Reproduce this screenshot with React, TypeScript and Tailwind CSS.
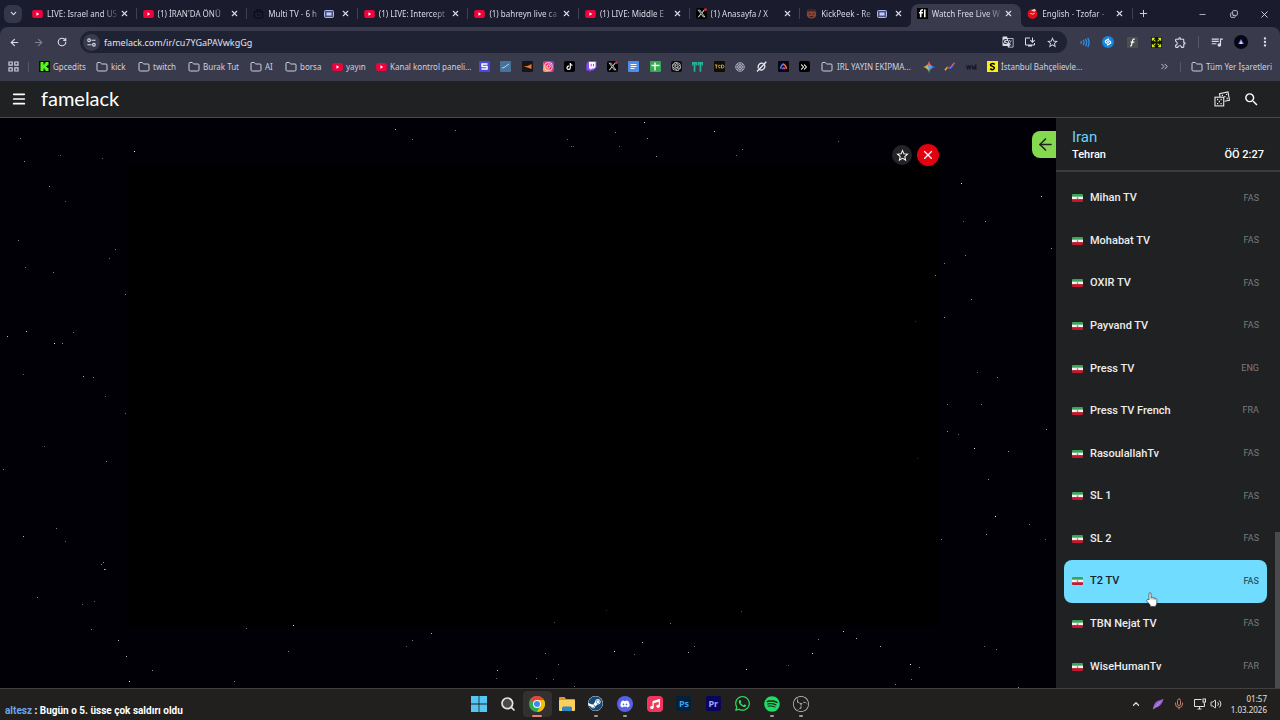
import React from 'react';
import {
  FaDiscord,
  FaInstagram,
  FaMusic,
  FaSpotify,
  FaTiktok,
  FaWhatsapp,
  FaXTwitter,
} from 'react-icons/fa6';
import { FaSteam } from 'react-icons/fa';
import {
  MdGTranslate,
  MdOutlineExtension,
  MdOutlineInstallDesktop,
  MdQueueMusic,
  MdStarBorder,
  MdMoreVert,
  MdSearch,
} from 'react-icons/md';
import { SiObsstudio, SiOpenai } from 'react-icons/si';
import {
  ArrowLeft,
  ArrowRight,
  ChevronDown,
  ChevronsRight,
  ChevronUp,
  Copy,
  Folder,
  Menu,
  Mic,
  Minus,
  Plus,
  RotateCw,
  Search,
  Volume2,
  X,
} from 'lucide-react';

const YouTubeIcon = () => (
  <svg viewBox="0 0 12 9" className="w-[11px] h-[8px] shrink-0">
    <rect width="12" height="9" rx="2.2" fill="#f0033c" />
    <path d="M4.8 2.5v4l3.2-2z" fill="#fff" />
  </svg>
);

const XIcon = () => (
  <span className="relative flex size-[11px] shrink-0 items-center justify-center rounded-xs bg-black text-[#d8d8d8]">
    <FaXTwitter className="size-[9px]" />
    <span className="absolute top-0 right-0 size-[3px] rounded-full bg-[#e0243a]" />
  </span>
);

const BagIcon = () => (
  <svg viewBox="0 0 12 12" className="size-[11px] shrink-0" fill="none" stroke="#0b0d16" strokeWidth="1.4">
    <rect x="1.5" y="4" width="9" height="7" rx="1" />
    <path d="M4 4V2h4v2M4.5 7.5h3" />
  </svg>
);

const KickPeekIcon = () => (
  <svg viewBox="0 0 12 12" className="size-[11px] shrink-0">
    <path d="M1 4q0-3 5-3t5 3v4q-1 3.500-5 3.500T1 8z" fill="#8a4632" />
    <path d="M1 4.500c1-5 9-5 10 0L8 3.500H4z" fill="#3b2320" />
    <path d="M3 6.500h2M7 6.500h2M4 9.300h4" stroke="#2a1715" strokeWidth="1" />
  </svg>
);

const FamelackIcon = () => (
  <svg viewBox="0 0 12 12" className="size-[11px] shrink-0">
    <rect width="12" height="12" fill="#050505" />
    <path d="M4 10V4q0-2 2.500-2M2.300 5.200h4.200M8.500 1.700V10" stroke="#fff" strokeWidth="1.700" fill="none" />
  </svg>
);

const TzofarIcon = () => (
  <svg viewBox="0 0 12 12" className="size-[11px] shrink-0">
    <circle cx="6" cy="6.500" r="5.400" fill="#e30b17" />
    <path d="M4.500 3L8 .8l2 1.700-2 1.500z" fill="#f6c4c4" />
    <path d="M3.500 5.800Q6 7.500 8.500 5.800" stroke="#fbdcdc" fill="none" />
  </svg>
);

const PictureInPicture = () => (
  <svg viewBox="0 0 10 8" className="w-[10px] h-[8px] shrink-0">
    <rect x=".5" y=".5" width="9" height="7" rx="1" fill="#4a5278" stroke="#a9b6f5" />
    <rect x="2.500" y="2.500" width="5" height="3" fill="#c4cdfa" />
  </svg>
);

const tabs = [
  { title: 'LIVE: Israel and US', icon: <YouTubeIcon /> },
  { title: "(1) İRAN'DA ÖNÜ", icon: <YouTubeIcon /> },
  { title: 'Multi TV - 6 h', icon: <BagIcon />, pip: true },
  { title: '(1) LIVE: Intercept', icon: <YouTubeIcon /> },
  { title: '(1) bahreyn live ca', icon: <YouTubeIcon /> },
  { title: '(1) LIVE: Middle E', icon: <YouTubeIcon /> },
  { title: '(1) Anasayfa / X', icon: <XIcon /> },
  { title: 'KickPeek - Re', icon: <KickPeekIcon />, pip: true },
  { title: 'Watch Free Live W', icon: <FamelackIcon />, active: true },
  { title: 'English - Tzofar -', icon: <TzofarIcon /> },
];

const TabStrip: React.FC = () => (
  <div className="flex h-[27px] text-[#d9dbe6]">
    <div className="flex w-[26px] items-center pl-1">
      <button aria-label="Search tabs" className="flex size-[18px] items-center justify-center rounded-md bg-[#34374a]">
        <ChevronDown className="size-[9px]" strokeWidth={3} />
      </button>
    </div>
    <div className="flex min-w-0 flex-1">
      {tabs.map((tab, index) => (
        <div
          key={index}
          className={
            tab.active
              ? 'relative mt-1 flex min-w-0 flex-1 items-center rounded-t-lg bg-[#393b4d] pb-1 pl-[6px]'
              : 'relative mt-1 flex min-w-0 flex-1 items-center pb-1 pl-[6px]'
          }
        >
          {tab.active && (
            <>
              <svg viewBox="0 0 6 6" className="absolute bottom-0 -left-[6px] size-[6px]">
                <path d="M6 0v6H0q6 0 6-6" fill="#393b4d" />
              </svg>
              <svg viewBox="0 0 6 6" className="absolute bottom-0 -right-[6px] size-[6px]">
                <path d="M0 0v6h6q-6 0-6-6" fill="#393b4d" />
              </svg>
            </>
          )}
          {tab.icon}
          <a
            href="#tab"
            className="ml-[4px] min-w-0 flex-1 overflow-hidden text-[8px] leading-3 whitespace-nowrap [mask-image:linear-gradient(to_right,#000_75%,transparent)]"
          >
            {tab.title}
          </a>
          {tab.pip && <PictureInPicture />}
          <button aria-label="Close tab" className={tab.pip ? 'mr-[8px] ml-[7px]' : 'mr-[8px]'}>
            <X className="size-[9px]" strokeWidth={3} />
          </button>
          {index < 7 && <span className="absolute top-[4px] right-0 h-[11px] w-px bg-[#3f4257]" />}
        </div>
      ))}
    </div>
    <div className="flex w-[148px] items-center">
      <span className="h-[11px] w-px bg-[#3f4257]" />
      <button aria-label="New tab" className="ml-[5px]">
        <Plus className="size-[11px]" />
      </button>
      <div className="ml-auto flex items-center pt-px">
        <button aria-label="Minimize" className="flex w-[31px] justify-center">
          <Minus className="size-[9px]" />
        </button>
        <button aria-label="Restore" className="flex w-[31px] justify-center">
          <Copy className="size-[8px] -scale-x-100 rotate-180" strokeWidth={2.5} />
        </button>
        <button aria-label="Close" className="flex w-[31px] justify-center">
          <X className="size-[11px]" />
        </button>
      </div>
    </div>
  </div>
);

const toolCell = 'flex w-6 shrink-0 items-center justify-center';

const Toolbar: React.FC = () => (
  <div className="flex h-[30px] items-center pr-[3px] pl-[2px]">
    <button aria-label="Back" className={toolCell}>
      <ArrowLeft className="size-[11px]" strokeWidth={2.5} />
    </button>
    <button aria-label="Forward" className={`${toolCell} text-[#7c7f90]`}>
      <ArrowRight className="size-[11px]" strokeWidth={2.5} />
    </button>
    <button aria-label="Reload" className={toolCell}>
      <RotateCw className="size-[10px]" strokeWidth={2.75} />
    </button>
    <form className="mr-[5px] ml-[6px] flex h-[22px] min-w-0 flex-1 items-center rounded-full bg-[#1f2233] pr-1 pl-[3px]">
      <button type="button" aria-label="Site information" className="flex size-[17px] items-center justify-center rounded-full bg-[#393b4d]">
        <svg viewBox="0 0 10 10" className="size-[9px]" fill="none" stroke="currentColor" strokeWidth="1.200">
          <circle cx="2.300" cy="2.500" r="1.500" />
          <path d="M5 2.500h4.500M.5 7.500H5" />
          <circle cx="7.700" cy="7.500" r="1.500" />
        </svg>
      </button>
      <input
        aria-label="Address"
        defaultValue="famelack.com/ir/cu7YGaPAVwkgGg"
        className="ml-[4px] h-4 min-w-0 flex-1 bg-transparent text-[9px] text-[#e2e3ee] outline-none"
      />
      <button type="button" aria-label="Translate" className="flex w-[22px] justify-center">
        <MdGTranslate className="size-[12px]" />
      </button>
      <button type="button" aria-label="Install" className="flex w-[22px] justify-center">
        <MdOutlineInstallDesktop className="size-[12px]" />
      </button>
      <button type="button" aria-label="Bookmark" className="flex w-[22px] justify-center">
        <MdStarBorder className="size-[13px]" />
      </button>
    </form>
    <button aria-label="Sound booster" className={toolCell}>
      <svg viewBox="0 0 12 12" className="size-[11px]" fill="none" stroke="#2792e8" strokeWidth="1.400">
        <path d="M2 4.500q1 1.500 0 3M4.500 3q2 3 0 6M7 2q2.700 4 0 8M9.500 1q3 5 0 10" />
      </svg>
    </button>
    <button aria-label="Shazam" className={toolCell}>
      <svg viewBox="0 0 12 12" className="size-[12px]" fill="none" stroke="#fff" strokeWidth="1.300">
        <circle cx="6" cy="6" r="6" fill="#1686e0" stroke="none" />
        <path d="M7 2.800L4.300 4.200q-1.800 1.200-.3 2.500 1 .7 2 0l.6-.5M5 9.200l2.700-1.400q1.800-1.200.3-2.500-1-.7-2 0l-.6.5" />
      </svg>
    </button>
    <button aria-label="Font finder" className={toolCell}>
      <svg viewBox="0 0 12 12" className="size-[11px]" fill="none" stroke="#fff" strokeWidth="1.300">
        <rect width="12" height="12" rx="1" fill="#4c4e50" stroke="none" />
        <path d="M8.500 2.500q-2-.8-2.500 1.500L5 8.500q-.4 1.500-1.500 1M4 5.500h4" />
      </svg>
    </button>
    <button aria-label="Full window" className={toolCell}>
      <svg viewBox="0 0 12 12" className="size-[11px]" fill="none" stroke="#d6ea27" strokeWidth="1.100">
        <rect width="12" height="12" fill="#15180d" stroke="none" />
        <path d="M1.500 4V1.500H4M8 1.500h2.500V4M10.500 8v2.500H8M4 10.500H1.500V8M2 2l2.800 2.800M10 2L7.200 4.800M10 10L7.200 7.200M2 10l2.800-2.800" />
      </svg>
    </button>
    <button aria-label="Extensions" className={toolCell}>
      <MdOutlineExtension className="size-[13px]" />
    </button>
    <span className="mx-[6px] h-3 w-px shrink-0 bg-[#55586c]" />
    <button aria-label="Media" className={toolCell}>
      <MdQueueMusic className="size-[14px]" />
    </button>
    <button aria-label="Profile" className={toolCell}>
      <svg viewBox="0 0 14 14" className="size-[14px]">
        <circle cx="7" cy="7" r="7" fill="#060616" />
        <path d="M7 4l3 5H4z" fill="#7277d8" />
        <path d="M7 5.500L8.500 9h-3z" fill="#d9dbff" />
      </svg>
    </button>
    <button aria-label="Menu" className={toolCell}>
      <MdMoreVert className="size-[14px]" />
    </button>
  </div>
);

const FolderIcon = () => <Folder className="size-[12px] shrink-0" strokeWidth={2} />;

const SahibindenIcon = () => (
  <svg viewBox="0 0 11 11" className="size-[11px] shrink-0">
    <rect width="11" height="11" fill="#fdf206" />
    <path d="M7.800 3.300Q5.500 1.700 4 3t1.500 2.400T6.800 8 3.200 7.600" fill="none" stroke="#000" strokeWidth="1.500" />
  </svg>
);

const KickIcon = () => (
  <svg viewBox="0 0 11 11" className="size-[11px] shrink-0">
    <rect width="11" height="11" fill="#0b0f0a" />
    <path d="M1.500 1h3v2.500h1V2.200h1V1H9.500v3H8.300v1H7.200v1h1.100v1H9.500v3h-3V8.800h-1V7.500h-1V10h-3z" fill="#4dfb15" />
  </svg>
);

const bookmarks = [
  { label: 'Gpcedits', icon: <KickIcon />, width: 'w-[57px]' },
  { label: 'kick', icon: <FolderIcon />, width: 'w-[42px]' },
  { label: 'twitch', icon: <FolderIcon />, width: 'w-[50px]' },
  { label: 'Burak Tut', icon: <FolderIcon />, width: 'w-[62px]' },
  { label: 'AI', icon: <FolderIcon />, width: 'w-[35px]' },
  { label: 'borsa', icon: <FolderIcon />, width: 'w-[47px]' },
  { label: 'yayın', icon: <YouTubeIcon />, width: 'w-[44px]' },
  { label: 'Kanal kontrol paneli...', icon: <YouTubeIcon />, width: 'w-[98px]' },
];

const tile = 'flex size-[11px] items-center justify-center rounded-xs';

const shortcuts = [
  <svg viewBox="0 0 11 11" className="size-[11px]">
    <rect width="11" height="11" rx="1" fill="#4a47e0" />
    <path d="M8.500 3H3v2.500h5V8H2.500" fill="none" stroke="#fff" strokeWidth="1.500" />
  </svg>,
  <svg viewBox="0 0 11 11" className="size-[11px]">
    <rect width="11" height="11" rx="1" fill="#47729c" />
    <path d="M2 7l2-.5L9 3" fill="none" stroke="#b9d4ea" />
  </svg>,
  <svg viewBox="0 0 11 11" className="size-[11px]">
    <rect width="11" height="11" rx="1" fill="#15161b" />
    <path d="M1.500 5h4L9.500 3v5L6 6.700z" fill="#f27422" />
  </svg>,
  <span className={`${tile} bg-linear-to-tr from-[#fdc23e] via-[#f0206a] to-[#8b2bd8] text-white`}>
    <FaInstagram className="size-[9px]" />
  </span>,
  <span className={`${tile} bg-black text-white`}>
    <FaTiktok className="size-[7px]" />
  </span>,
  <svg viewBox="0 0 11 11" className="size-[11px]">
    <path d="M.5 2.500L2.500 0h8v6.500L7 9.500H5.200L3.500 11V9.500h-3z" fill="#9146ff" />
    <path d="M3 1h6.500v5L8 7.500H6L4.500 9V7.500H3z" fill="#fff" />
    <path d="M5.200 2.800v2.500M7.500 2.800v2.500" stroke="#9146ff" />
  </svg>,
  <XIcon />,
  <svg viewBox="0 0 11 11" className="size-[11px]">
    <rect width="11" height="11" rx="1" fill="#4b8df0" />
    <path d="M2.500 3.500h6M2.500 5.500h6M2.500 7.500h4" stroke="#fff" />
  </svg>,
  <svg viewBox="0 0 11 11" className="size-[11px]">
    <rect width="11" height="11" rx="1" fill="#34a853" />
    <path d="M1.500 4.500h8M5 1.500v8" stroke="#e9fbe9" strokeWidth="1.500" />
  </svg>,
  <span className={`${tile} bg-[#0c0c0f] text-white`}>
    <SiOpenai className="size-[9px]" />
  </span>,
  <svg viewBox="0 0 11 11" className="size-[11px]" fill="#27b295">
    <path d="M0 1h5.200v3.500H3.700V2.700h-.3v8H1.700v-8h-.3v1.800H0zM5.800 1H11v3.500H9.600V2.700h-.3v8H7.600v-8h-.3v1.800H5.800z" />
  </svg>,
  <svg viewBox="0 0 11 11" className="size-[11px]" fill="none" stroke="#d3a72e">
    <rect width="11" height="11" rx="1" fill="#0e0d0b" stroke="none" />
    <path d="M1 4h2.500M2.300 4v3.500M6.500 4.500q-2-1-2 1t2 1.300M7.500 4h1q1.500 0 1.500 1.500T8.500 7h-1z" />
  </svg>,
  <svg viewBox="0 0 11 11" className="size-[10px]" fill="none" stroke="#b9bbc8">
    <circle cx="5.500" cy="5.500" r="4.700" />
    <circle cx="5.500" cy="5.500" r="2.700" />
    <path d="M5.500 1v9M1 5.500h9M2.300 2.300l6.400 6.400M8.700 2.300L2.300 8.700" strokeWidth=".6" />
  </svg>,
  <svg viewBox="0 0 11 11" className="size-[11px]" fill="none" stroke="#e9eaf2" strokeWidth="1.300">
    <path d="M7.500 2.500a3.800 3.800 0 0 0-5 5M3.500 8.700a3.800 3.800 0 0 0 5-5M1 10.500L10.300.8" />
  </svg>,
  <svg viewBox="0 0 11 11" className="size-[11px]" fill="none" strokeWidth="1.500">
    <rect width="11" height="11" rx="1" fill="#08080c" />
    <path d="M2.500 8q.5-4 3-5" stroke="#3f7df5" />
    <path d="M5 3q3 1 3.500 5" stroke="#f0643c" />
    <path d="M4.500 8.200q1-3 2.500 0" stroke="#c14be0" />
  </svg>,
  <span className={`${tile} bg-black text-white`}>
    <ChevronsRight className="size-[10px]" strokeWidth={2.5} />
  </span>,
];

const moreShortcuts = [
  <svg viewBox="0 0 12 12" className="size-[12px]">
    <path d="M6 0q.9 4 3 5L6 6 3 5q2.100-1 3-5" fill="#e9655b" />
    <path d="M12 6q-5 .9-6 6V5l2.500-.5Q9.500 5.500 12 6" fill="#4b8df5" />
    <path d="M6 12Q5.500 9 3.500 7.500L6 6z" fill="#4cae5c" />
    <path d="M0 6q3-.5 4-2l2 2v3L3.500 7.500Q2 6.400 0 6" fill="#e3b53f" />
    <circle cx="6.500" cy="6" r="1.800" fill="#5f9bf0" />
  </svg>,
  <svg viewBox="0 0 12 12" className="size-[11px]" fill="none" strokeWidth="1.800">
    <path d="M1 10l3-3.500" stroke="#e8a33d" />
    <path d="M3.500 6.500l3 1.500" stroke="#d9413b" />
    <path d="M6.500 8L10 4" stroke="#4c7ff0" />
    <path d="M9 5l2.500-3" stroke="#e34e41" />
  </svg>,
  <svg viewBox="0 0 12 6" className="w-[11px] h-[6px]" fill="none" stroke="#171822" strokeWidth="1.300">
    <path d="M.5 1l1.300 4L3 2l1.200 3L5.500 1M7 1v4M7 3h1.800v2H7M11.800 1h-1.600v4h1.600M10.200 3h1.500" />
  </svg>,
];

const bookmarkLabel = 'text-[8px] leading-3 whitespace-nowrap';

const BookmarksBar: React.FC = () => (
  <div className="flex h-6 items-center overflow-hidden pb-[5px] pr-2 text-[#cfd1df]">
    <button aria-label="Apps" className="ml-2 shrink-0">
      <svg viewBox="0 0 11 11" className="size-[11px]" fill="none" stroke="currentColor" strokeWidth="1.200">
        <path d="M1 1h3.200v3.200H1zM6.800 1H10v3.200H6.800zM1 6.800h3.200V10H1zM6.800 6.800H10V10H6.800z" />
      </svg>
    </button>
    <span className="mr-[10px] ml-[9px] h-[10px] w-px shrink-0 bg-[#55586c]" />
    {bookmarks.map((bookmark) => (
      <a href="#bookmark" key={bookmark.label} className={`flex shrink-0 items-center gap-[3px] ${bookmark.width}`}>
        {bookmark.icon}
        <span className={bookmarkLabel}>{bookmark.label}</span>
      </a>
    ))}
    <div className="flex w-[341px] shrink-0">
      {shortcuts.map((icon, index) => (
        <a href="#shortcut" key={index} className="flex flex-1 items-center justify-center">
          {icon}
        </a>
      ))}
    </div>
    <a href="#folder" className="ml-[6px] flex w-[97px] shrink-0 items-center gap-[4px]">
      <FolderIcon />
      <span className={bookmarkLabel}>IRL YAYIN EKİPMA...</span>
    </a>
    <div className="flex w-16 shrink-0">
      {moreShortcuts.map((icon, index) => (
        <a href="#shortcut" key={index} className="flex flex-1 items-center justify-center">
          {icon}
        </a>
      ))}
    </div>
    <a href="#bookmark" className="ml-[5px] flex shrink-0 items-center gap-[3px]">
      <SahibindenIcon />
      <span className={bookmarkLabel}>İstanbul Bahçelievle...</span>
    </a>
    <button aria-label="More bookmarks" className="ml-auto shrink-0">
      <ChevronsRight className="size-[11px]" />
    </button>
    <span className="mx-[10px] h-[10px] w-px shrink-0 bg-[#55586c]" />
    <a href="#all" className="flex shrink-0 items-center gap-[3px]">
      <FolderIcon />
      <span className={bookmarkLabel}>Tüm Yer İşaretleri</span>
    </a>
  </div>
);

const DiceIcon = () => (
  <svg viewBox="0 0 16 16" className="size-4" fill="none" stroke="#e8e8e8" strokeWidth="1.100">
    <path d="M6 5.800L5.500 2.600 14 1l1.500 8.300-5 .9" />
    <rect x="1" y="6.200" width="8.700" height="8.700" />
    <path d="M3 8.500h1.200M6.500 8.500h1.200M4.800 10.500H6M3 12.600h1.200M6.500 12.600h1.200M7.800 4.300H9M12 3.400h1.200M12.600 7.500h1.200M10.200 5.600h1.200" strokeWidth="1.300" />
  </svg>
);

const AppHeader: React.FC = () => (
  <header className="flex h-[37px] items-center border-b border-[#4a4a4c] bg-[#202123] pl-[11px] text-white">
    <button aria-label="Open menu">
      <Menu className="size-[16px]" strokeWidth={2.5} />
    </button>
    <h1 className="ml-[14px] pb-[3px] font-[Lato] text-[20px] leading-6 font-normal">famelack</h1>
    <button aria-label="Random channel" className="ml-auto">
      <DiceIcon />
    </button>
    <button aria-label="Search" className="mr-5 ml-[13px]">
      <MdSearch className="size-[17px]" />
    </button>
  </header>
);

// x, y, brightness (0 to 1) of each star in the backdrop
const stars = [
  [20, 20, 0.5], [24, 43, 0.6], [60, 37, 0.4], [102, 40, 0.4], [134, 33, 1], [49, 68, 0.6], [65, 83, 0.4],
  [18, 122, 0.5], [25, 149, 0.5], [53, 154, 0.5], [115, 131, 0.5], [109, 140, 0.4], [125, 176, 0.5],
  [26, 213, 0.8], [7, 218, 0.7], [73, 214, 0.5], [54, 225, 0.9], [62, 225, 0.6], [23, 256, 0.4],
  [83, 258, 0.7], [93, 259, 0.5], [105, 278, 0.4], [125, 295, 0.4], [44, 328, 0.4], [106, 343, 0.5],
  [3, 351, 0.5], [56, 410, 0.5], [23, 418, 0.7], [65, 423, 0.4], [103, 444, 0.6], [101, 446, 0.5],
  [104, 451, 0.7], [105, 451, 0.5], [37, 479, 0.5], [82, 486, 0.4], [94, 483, 0.4], [91, 511, 0.5],
  [118, 522, 0.7], [126, 538, 0.7], [152, 552, 0.6], [129, 563, 1], [246, 510, 0.5], [293, 507, 0.9],
  [288, 533, 0.5], [234, 563, 0.5], [395, 11, 0.7], [412, 21, 0.5], [455, 12, 0.5], [567, 21, 0.4],
  [571, 28, 0.4], [573, 28, 0.4], [615, 14, 0.5], [619, 28, 0.4], [644, 4, 0.8], [647, 20, 0.6],
  [656, 38, 0.6], [714, 13, 0.8], [736, 37, 0.4], [742, 31, 0.5], [838, 23, 0.4], [961, 65, 0.9],
  [1041, 78, 0.8], [963, 103, 0.4], [985, 103, 0.6], [1051, 130, 0.6], [965, 137, 0.5], [944, 145, 0.5],
  [935, 157, 0.5], [971, 181, 0.6], [944, 199, 0.6], [915, 203, 0.2], [977, 254, 0.4], [997, 259, 0.5],
  [947, 286, 0.5], [981, 286, 0.5], [947, 313, 0.6], [958, 316, 0.4], [1046, 311, 0.6], [974, 330, 0.9],
  [1008, 333, 0.6], [988, 361, 0.6], [917, 340, 0.2], [995, 398, 1], [1029, 406, 0.5], [986, 416, 0.6],
  [941, 421, 0.5], [1045, 421, 0.4], [406, 528, 0.4], [412, 522, 0.5], [431, 515, 0.7], [497, 552, 0.7],
  [496, 560, 0.4], [536, 560, 0.5], [553, 561, 0.4], [545, 535, 0.5], [558, 546, 0.5], [574, 568, 0.5],
  [554, 504, 0.3], [606, 492, 0.2], [741, 493, 0.3], [614, 533, 0.9], [634, 536, 0.4], [642, 524, 0.7],
  [670, 505, 0.5], [688, 534, 0.7], [694, 528, 0.5], [746, 551, 0.8], [788, 547, 0.4], [812, 535, 0.9],
  [818, 521, 0.5], [843, 513, 0.8], [856, 520, 0.7], [880, 528, 0.7], [895, 566, 0.5], [910, 546, 1],
  [919, 549, 0.5], [911, 561, 0.5], [984, 528, 0.4], [996, 531, 0.5], [1018, 569, 0.6],
];

const channels = [
  { name: 'Mihan TV', lang: 'FAS' },
  { name: 'Mohabat TV', lang: 'FAS' },
  { name: 'OXIR TV', lang: 'FAS' },
  { name: 'Payvand TV', lang: 'FAS' },
  { name: 'Press TV', lang: 'ENG' },
  { name: 'Press TV French', lang: 'FRA' },
  { name: 'RasoulallahTv', lang: 'FAS' },
  { name: 'SL 1', lang: 'FAS' },
  { name: 'SL 2', lang: 'FAS' },
  { name: 'T2 TV', lang: 'FAS', active: true },
  { name: 'TBN Nejat TV', lang: 'FAS' },
  { name: 'WiseHumanTv', lang: 'FAR' },
];

const IranFlag = () => (
  <svg viewBox="0 0 11 8" className="w-[11px] h-[8px] shrink-0">
    <path d="M0 1q0-1 1-1h9q1 0 1 1v2H0z" fill="#3da35a" />
    <path d="M0 2.700h11v2.800H0z" fill="#f4f4f4" />
    <path d="M0 5.300h11V7q0 1-1 1H1q-1 0-1-1z" fill="#c9152b" />
    <circle cx="5.500" cy="4.100" r=".9" fill="#d9606c" />
  </svg>
);

const HandCursor = () => (
  <svg viewBox="0 0 12 15" className="pointer-events-none absolute top-[32px] left-[82px] z-10 h-[15px] w-[12px]">
    <path
      d="M3 8V1.800Q3 .6 4 .6t1 1.200V5.500q1.600-.7 2 .4 1.500-.5 1.900.5 1.900-.3 1.900 1.200V11q0 1.300-.9 2.200v1.200H4.200V13L1 9.300Q.2 8 1.300 7.600T3 8z"
      fill="#fff"
      stroke="#222"
      strokeWidth=".6"
    />
    <path d="M5 5.500V7.500M7 6v1.700M8.900 6.400V8" stroke="#333" strokeWidth=".5" />
  </svg>
);

const Sidebar: React.FC = () => (
  <aside className="relative flex w-56 shrink-0 flex-col bg-[#202123] font-[Roboto] text-white">
    <button aria-label="Hide list" className="absolute top-[13px] -left-6 flex h-[27px] w-6 items-center justify-center rounded-l-lg bg-[#84d94e] pl-[3px] text-[#222]">
      <ArrowLeft className="size-[19px]" strokeWidth={2} />
    </button>
    <div className="flex h-[54px] flex-col border-b-2 border-[#3c3c3f] pt-[9px] pr-4 pl-4">
      <h2 className="text-[15px] leading-5 text-[#6bd3fb]">Iran</h2>
      <div className="flex justify-between text-[11px] leading-4 font-medium">
        <span>Tehran</span>
        <span>ÖÖ 2:27</span>
      </div>
    </div>
    <ul className="flex flex-1 flex-col pt-[5px] pr-[13px] pl-2">
      {channels.map((channel) => (
        <li key={channel.name} className="relative flex min-h-[42px] flex-1">
          <a
            href="#channel"
            className={
              channel.active
                ? 'flex flex-1 items-center rounded-lg bg-[#70dcff] px-2 text-[#14242c]'
                : 'flex flex-1 items-center px-2 text-[#ededed]'
            }
          >
            <IranFlag />
            <span className="ml-[7px] text-[11px] leading-4 font-medium">{channel.name}</span>
            <span className={channel.active ? 'ml-auto text-[9px] font-medium text-[#315a69]' : 'ml-auto text-[9px] text-[#7b7c7e]'}>
              {channel.lang}
            </span>
          </a>
          {channel.active && <HandCursor />}
        </li>
      ))}
    </ul>
    <span className="absolute right-0 bottom-0 h-[156px] w-[5px] bg-[#4b4b4d]" />
  </aside>
);

const Player: React.FC = () => (
  <main className="relative flex min-w-0 flex-1 flex-col bg-[#010007] pr-[117px] pl-[128px]">
    <svg className="absolute inset-0 size-full" aria-hidden="true">
      {stars.map(([x, y, light], index) => (
        <rect key={index} x={x} y={y} width="1" height="1" fill="#fff" opacity={light} />
      ))}
    </svg>
    <div className="relative flex h-[48px] items-end justify-end gap-[5px] pt-[26px]">
      <button aria-label="Add to favourites" className="mb-px flex size-[20px] items-center justify-center rounded-full bg-[#242426] text-white">
        <MdStarBorder className="size-[15px]" />
      </button>
      <button aria-label="Close player" className="flex size-[22px] items-center justify-center rounded-full bg-[#e3000f] text-white">
        <X className="size-[14px]" strokeWidth={2} />
      </button>
    </div>
    <div className="min-h-[200px] flex-1 bg-black" />
    <div className="h-[62px]" />
  </main>
);

const AppTile = ({ name, children, state }: { name: string; children: React.ReactNode; state?: string }) => (
  <button
    aria-label={name}
    className={
      state === 'active'
        ? 'relative flex h-[26px] flex-1 items-center justify-center rounded-sm bg-[#33302f]'
        : 'relative flex h-[26px] flex-1 items-center justify-center'
    }
  >
    {children}
    {state === 'active' && <span className="absolute bottom-0 h-[2px] w-[10px] rounded-full bg-[#e98080]" />}
    {state === 'open' && <span className="absolute bottom-0 h-[2px] w-[4px] rounded-full bg-[#9d9b9a]" />}
  </button>
);

const Taskbar: React.FC = () => (
  <footer className="grid h-8 grid-cols-[1fr_352px_1fr] items-center border-t border-[#413f3f] bg-[#22201f]">
    <p className="self-end pb-[2px] pl-[5px] font-[Roboto] text-[10px] leading-[14px] font-bold whitespace-nowrap text-white">
      <span className="text-[#6aa9e6]">altesz</span> : Bugün o 5. üsse çok saldırı oldu
    </p>
    <nav className="flex pb-[2px]">
      <AppTile name="Start">
        <svg viewBox="0 0 16 16" className="size-4" fill="#55c5f3">
          <path d="M0 0h7.600v7.600H0zM8.400 0H16v7.600H8.400zM0 8.400h7.600V16H0zM8.400 8.400H16V16H8.400z" />
        </svg>
      </AppTile>
      <AppTile name="Search">
        <Search className="size-4 fill-[#4a4848] text-[#e6e6e6]" strokeWidth={2.5} />
      </AppTile>
      <AppTile name="Chrome" state="active">
        <svg viewBox="0 0 16 16" className="size-4">
          <circle cx="8" cy="8" r="8" fill="#2da94f" />
          <path d="M8 8L1.070 4A8 8 0 0 1 14.930 4z" fill="#ea4335" />
          <path d="M8 4h6.930A8 8 0 0 1 8 16l3.500-6z" fill="#fbbc05" />
          <circle cx="8" cy="8" r="4" fill="#fff" />
          <circle cx="8" cy="8" r="3" fill="#4285f4" />
        </svg>
      </AppTile>
      <AppTile name="File Explorer">
        <svg viewBox="0 0 16 14" className="h-[14px] w-4">
          <path d="M0 1q0-1 1-1h4.500l1.500 2H15q1 0 1 1v4H0z" fill="#d9982a" />
          <rect y="3" width="16" height="11" rx="1" fill="#fbd15b" />
          <path d="M3 14v-3q0-1.500 1.500-1.500h7q1.500 0 1.500 1.500v3z" fill="#2f86c9" />
        </svg>
      </AppTile>
      <AppTile name="Steam" state="open">
        <FaSteam className="size-[15px] rounded-full bg-white text-[#174a78]" />
      </AppTile>
      <AppTile name="Discord" state="open">
        <span className="flex size-4 items-center justify-center rounded-full bg-[#5661e8] text-white">
          <FaDiscord className="size-[10px]" />
        </span>
      </AppTile>
      <AppTile name="Music">
        <span className="flex size-4 items-center justify-center rounded-sm bg-[#f0365a] text-white">
          <FaMusic className="size-[10px]" />
        </span>
      </AppTile>
      <AppTile name="Photoshop">
        <span className="flex size-[15px] items-center justify-center rounded-xs bg-[#04203a] text-[9px] font-bold text-[#36a5f5]">Ps</span>
      </AppTile>
      <AppTile name="Premiere Pro">
        <span className="flex size-[15px] items-center justify-center rounded-xs bg-[#07055c] text-[9px] font-bold text-[#a8a4fb]">Pr</span>
      </AppTile>
      <AppTile name="WhatsApp">
        <FaWhatsapp className="size-[17px] text-[#32d865]" />
      </AppTile>
      <AppTile name="Spotify" state="open">
        <FaSpotify className="size-4 text-[#1fdd63]" />
      </AppTile>
      <AppTile name="OBS Studio" state="open">
        <SiObsstudio className="size-4 text-[#c9c8c8]" />
      </AppTile>
    </nav>
    <div className="flex items-center justify-end pr-[13px] pb-px text-[#e2e0df]">
      <button aria-label="Hidden icons" className="mr-[11px]">
        <ChevronUp className="size-[10px]" strokeWidth={3} />
      </button>
      <svg viewBox="0 0 12 12" className="mr-[9px] size-[12px]">
        <path d="M1 11.500Q1.500 5 5.500 3 8.500 2.200 11.500.8 11 4.500 8.500 7 5.500 10 2.800 9.500z" fill="#9a5fd6" />
        <path d="M1.500 11L8.500 3.800" stroke="#d9b8f5" strokeWidth=".7" />
      </svg>
      <Mic className="mr-[9px] size-[12px] text-[#c27d6b]" />
      <svg viewBox="0 0 12 12" className="mr-[4px] size-[12px]" fill="none" stroke="currentColor">
        <path d="M7.500 1.500h-7v7h10V6M3.500 11h4M5.500 8.500V11" />
        <rect x="9" y="1" width="2.500" height="3" />
        <path d="M10.200 4v2.500" />
      </svg>
      <Volume2 className="size-[12px]" />
      <time className="ml-[4px] w-[41px] text-right text-[8px] leading-[11px] whitespace-nowrap">
        01:57
        <br />
        1.03.2026
      </time>
    </div>
  </footer>
);

export default function App() {
  return (
    <div className="flex min-h-screen flex-col overflow-hidden bg-black font-['Noto_Sans',sans-serif]">
      <div className="bg-[#1a1c2d]">
        <TabStrip />
        <div className="rounded-t-lg bg-[#393b4d] text-[#d9dbe6]">
          <Toolbar />
          <BookmarksBar />
        </div>
      </div>
      <AppHeader />
      <div className="flex flex-1">
        <Player />
        <Sidebar />
      </div>
      <Taskbar />
    </div>
  );
}
